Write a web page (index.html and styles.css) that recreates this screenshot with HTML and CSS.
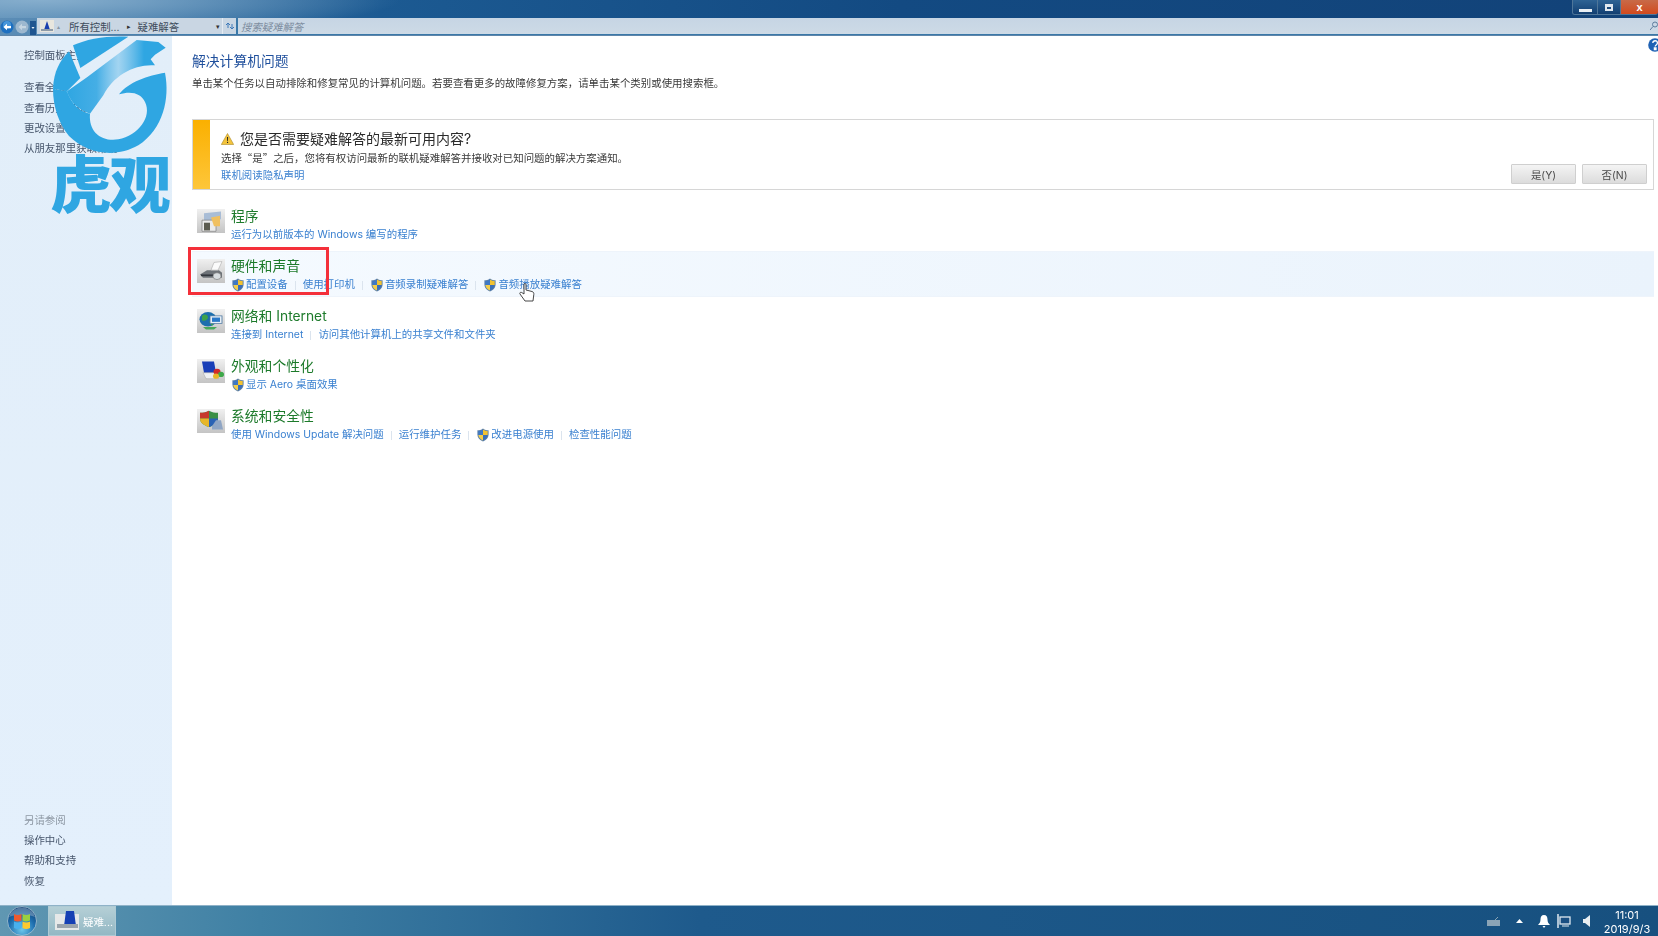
FILE: index.html
```html
<!DOCTYPE html>
<html lang="zh-CN">
<head>
<meta charset="utf-8">
<title>疑难解答</title>
<link rel="stylesheet" href="styles.css">
</head>
<body>
<svg class="defs" width="0" height="0" aria-hidden="true">
  <defs>
    <linearGradient id="tile" x1="0" y1="0" x2="0" y2="1"><stop offset="0" stop-color="#f0f0f0"/><stop offset="1" stop-color="#c4c4c4"/></linearGradient>
    <linearGradient id="swirl" x1="0" y1="0" x2="1" y2="0"><stop offset="0" stop-color="#2fa6e2"/><stop offset=".3" stop-color="#45aee5"/><stop offset=".52" stop-color="#8ccbee" stop-opacity=".75"/><stop offset=".78" stop-color="#2fa6e2"/><stop offset="1" stop-color="#2fa6e2"/></linearGradient>
  </defs>
  <symbol id="shield" viewBox="0 0 14 15">
    <path d="M7 .5C5 2 3 2.500 1 2.500V7c0 3.500 2.500 6 6 7.500 3.500-1.500 6-4 6-7.500V2.500C11 2.500 9 2 7 .5Z" fill="#5b7fa8"/>
    <path d="M7 1.500C5.300 2.700 3.700 3.200 2 3.300V7.500H7Z" fill="#3f78c4"/>
    <path d="M7 1.500C8.700 2.700 10.300 3.200 12 3.300V7.500H7Z" fill="#f2c230"/>
    <path d="M2 7.500H7V13.400C4.300 12.200 2.300 10.200 2 7.500Z" fill="#f4ce4a"/>
    <path d="M12 7.500H7V13.400C9.700 12.200 11.700 10.200 12 7.500Z" fill="#3a6fb8"/>
  </symbol>
</svg>
<div class="window">
  <header class="titlebar">
    <div class="controls">
      <span class="ctl ctl-min"><i></i></span>
      <span class="ctl ctl-max"><i></i></span>
      <span class="ctl ctl-close">x</span>
    </div>
  </header>
  <div class="addressbar">
    <div class="nav">
      <svg width="36" height="18" viewBox="0 0 36 18">
        <circle cx="7" cy="9" r="6.500" fill="#1d6fc0"/>
        <circle cx="7" cy="7" r="4" fill="#5aa6e6" opacity=".7"/>
        <path d="M3.500 9 7 5.800V8H11V10.200H7V12.200Z" fill="#fff"/>
        <circle cx="22" cy="9" r="6.500" fill="#9db8cf"/>
        <path d="M18.500 9 22 5.800V8H26V10.200H22V12.200Z" fill="#c6d6e2"/>
        <rect x="30" y="3" width="6" height="14" fill="#1f5590"/>
        <path d="M31.500 9H34.500L33 11Z" fill="#e8f0f8"/>
      </svg>
    </div>
    <div class="crumbs">
      <svg class="crumb-icon" width="14" height="14" viewBox="0 0 14 14">
        <rect x="0" y="1" width="14" height="12" fill="#e8e6de"/>
        <path d="M4 11 7 2l3 9Z" fill="#1a3fae"/>
        <rect x="1" y="10" width="12" height="2" fill="#8d9aa8"/>
      </svg>
      <span class="crumb-sep">▴</span>
      <span class="crumb">所有控制...</span>
      <span class="crumb-arrow">▸</span>
      <span class="crumb">疑难解答</span>
      <span class="crumb-drop">▾</span>
    </div>
    <div class="refresh">
      <svg width="10" height="10" viewBox="0 0 10 10"><path d="M1 4 3 2l2 2M3 2v5M9 6 7 8 5 6M7 8V3" fill="none" stroke="#3c78b8" stroke-width="1"/></svg>
    </div>
    <div class="search">
      <span class="search-text">搜索疑难解答</span>
      <svg class="search-icon" width="8" height="10" viewBox="0 0 8 10"><circle cx="5" cy="3.500" r="2.500" fill="none" stroke="#5d7c9c"/><path d="M3 5.500 0 9" stroke="#5d7c9c"/></svg>
    </div>
  </div>
  <div class="main">
    <aside class="sidebar">
      <nav class="side-top">
        <a class="side-home">控制面板主页</a>
        <a>查看全部</a>
        <a>查看历史记录</a>
        <a>更改设置</a>
        <a>从朋友那里获取帮助</a>
      </nav>
      <nav class="side-bottom">
        <span class="side-label">另请参阅</span>
        <a>操作中心</a>
        <a>帮助和支持</a>
        <a>恢复</a>
      </nav>
    </aside>
    <main class="content">
      <h1 class="page-title">解决计算机问题</h1>
      <p class="page-sub">单击某个任务以自动排除和修复常见的计算机问题。若要查看更多的故障修复方案，请单击某个类别或使用搜索框。</p>

      <section class="banner">
        <div class="banner-strip"></div>
        <div class="banner-body">
          <div class="banner-title">
            <svg width="13" height="12" viewBox="0 0 13 12"><path d="M6.500.5 12.700 11.500H.3Z" fill="#f3c33b" stroke="#a98a2a" stroke-width=".6"/><path d="M6 4h1.100l-.2 4.200h-.7ZM6 9h1.100v1.100H6Z" fill="#222"/></svg>
            <span>您是否需要疑难解答的最新可用内容?</span>
          </div>
          <p class="banner-text">选择“是”之后，您将有权访问最新的联机疑难解答并接收对已知问题的解决方案通知。</p>
          <a class="link">联机阅读隐私声明</a>
        </div>
        <div class="banner-actions">
          <button class="btn">是(Y)</button>
          <button class="btn">否(N)</button>
        </div>
      </section>

      <div class="cat">
        <svg class="cat-icon" viewBox="0 0 28 28" preserveAspectRatio="none">
          <rect width="28" height="28" fill="url(#tile)"/>
          <path d="M7 5 24 3V12L7 14Z" fill="#a9bdd6"/>
          <path d="M5 13H19V26H5Z" fill="#ececec" stroke="#777" stroke-width=".7"/>
          <rect x="7" y="16" width="6" height="9" fill="#5c5c50"/>
          <path d="M14 10 23 8V20H17Z" fill="#f0c060"/>
        </svg>
        <div class="cat-body">
          <a class="cat-title">程序</a>
          <div class="cat-links"><a class="link">运行为以前版本的 Windows 编写的程序</a></div>
        </div>
      </div>

      <div class="cat cat-hover">
        <svg class="cat-icon" viewBox="0 0 28 28" preserveAspectRatio="none">
          <rect width="28" height="28" fill="url(#tile)"/>
          <path d="M3 18 10 13H22L25 16V22H6Z" fill="#6e7378"/>
          <path d="M17 4 25 3 21 13H14Z" fill="#fbfbfb" stroke="#999" stroke-width=".5"/>
          <path d="M4 18H16V20H4Z" fill="#33383e"/>
          <circle cx="20" cy="20" r="4" fill="#d8dde0" stroke="#777" stroke-width=".7"/>
        </svg>
        <div class="cat-body">
          <a class="cat-title">硬件和声音</a>
          <div class="cat-links">
            <a class="link"><svg class="shield"><use href="#shield"/></svg>配置设备</a>
            <i class="sep"></i>
            <a class="link">使用打印机</a>
            <i class="sep"></i>
            <a class="link"><svg class="shield"><use href="#shield"/></svg>音频录制疑难解答</a>
            <i class="sep"></i>
            <a class="link"><svg class="shield"><use href="#shield"/></svg>音频播放疑难解答</a>
          </div>
        </div>
      </div>

      <div class="cat cat-after">
        <svg class="cat-icon" viewBox="0 0 28 28" preserveAspectRatio="none">
          <rect width="28" height="28" fill="url(#tile)"/>
          <circle cx="11" cy="12" r="8.500" fill="#1c6fae"/>
          <path d="M5 8c3-3 6-1 6 2s-4 5-6 3ZM12 14l5 1-2 5Z" fill="#3ea24a"/>
          <rect x="13" y="8" width="12" height="9" fill="#e7eef5" stroke="#44709c" stroke-width=".8"/>
          <rect x="15" y="10" width="8" height="5" fill="#2a78c8"/>
          <path d="M6 21H20L17 24H9Z" fill="#49a85c"/>
        </svg>
        <div class="cat-body">
          <a class="cat-title">网络和 Internet</a>
          <div class="cat-links">
            <a class="link">连接到 Internet</a>
            <i class="sep"></i>
            <a class="link">访问其他计算机上的共享文件和文件夹</a>
          </div>
        </div>
      </div>

      <div class="cat">
        <svg class="cat-icon" viewBox="0 0 28 28" preserveAspectRatio="none">
          <rect width="28" height="28" fill="url(#tile)"/>
          <path d="M5 3H17L19 16H7Z" fill="#1a3fb8"/>
          <path d="M6 16H18L22 23H9Z" fill="#eef0f2" stroke="#999" stroke-width=".5"/>
          <circle cx="20" cy="15" r="3.500" fill="#d22a2a"/>
          <circle cx="24" cy="18" r="3" fill="#3fa84a"/>
          <circle cx="19" cy="20" r="3" fill="#e8b628"/>
        </svg>
        <div class="cat-body">
          <a class="cat-title">外观和个性化</a>
          <div class="cat-links">
            <a class="link"><svg class="shield"><use href="#shield"/></svg>显示 Aero 桌面效果</a>
          </div>
        </div>
      </div>

      <div class="cat">
        <svg class="cat-icon" viewBox="0 0 28 28" preserveAspectRatio="none">
          <rect width="28" height="28" fill="url(#tile)"/>
          <path d="M12 2C9 4 6 4.500 3 4.500V11C3 16 7 19 12 21 17 19 21 16 21 11V4.500C18 4.500 15 4 12 2Z" fill="#3a8f46"/>
          <path d="M12 2C9 4 6 4.500 3 4.500V11H12Z" fill="#c7392c"/>
          <path d="M12 11H3C3 16 7 19 12 21Z" fill="#e8b628"/>
          <path d="M12 11H21C21 16 17 19 12 21Z" fill="#2a62b4"/>
          <path d="M15 20 19 13H24L26 24H15Z" fill="#8fa5c4"/>
        </svg>
        <div class="cat-body">
          <a class="cat-title">系统和安全性</a>
          <div class="cat-links">
            <a class="link">使用 Windows Update 解决问题</a>
            <i class="sep"></i>
            <a class="link">运行维护任务</a>
            <i class="sep"></i>
            <a class="link"><svg class="shield"><use href="#shield"/></svg>改进电源使用</a>
            <i class="sep"></i>
            <a class="link">检查性能问题</a>
          </div>
        </div>
      </div>
    </main>
  </div>
  <footer class="taskbar">
    <svg class="orb" width="32" height="30" viewBox="0 0 32 30">
      <defs><radialGradient id="orbfill" cx=".5" cy=".8" r=".8"><stop offset="0" stop-color="#6cc8ec"/><stop offset=".55" stop-color="#1f70b0"/><stop offset="1" stop-color="#0d3c70"/></radialGradient></defs>
      <circle cx="16" cy="15" r="14.500" fill="url(#orbfill)" stroke="#a8c4d4" stroke-width=".8"/>
      <path d="M3 11C5 4 11 1.500 16 1.500S27 4 29 11C22 8 10 8 3 11Z" fill="#fff" opacity=".28"/>
      <path d="M8 8c2.500 1.200 5 1.200 7.500 0v6.500c-2.500 1.200-5 1.200-7.500 0Z" fill="#ee5a30"/>
      <path d="M16.500 8c2.500 1.200 5 1.200 7.500 0v6.500c-2.500 1.200-5 1.200-7.500 0Z" fill="#9ad040"/>
      <path d="M8 15.500c2.500 1.200 5 1.200 7.500 0V22c-2.500 1.200-5 1.200-7.500 0Z" fill="#48b0ee"/>
      <path d="M16.500 15.500c2.500 1.200 5 1.200 7.500 0V22c-2.500 1.200-5 1.200-7.500 0Z" fill="#fcca30"/>
    </svg>
    <div class="task">
      <svg width="26" height="24" viewBox="0 0 26 24">
        <rect x="1" y="5" width="24" height="16" fill="#e6e8e8"/>
        <path d="M12 2H20L22 17H10Z" fill="#1640b4"/>
        <path d="M3 15H24V19H3Z" fill="#9ba4ac"/>
      </svg>
      <span>疑难...</span>
    </div>
    <div class="tray">
      <svg class="tray-kbd" width="15" height="11" viewBox="0 0 15 11"><path d="M1 4H14V10H1Z" fill="#8ba4b6"/><path d="M9 4 12 1" stroke="#8ba4b6"/></svg>
      <svg class="tray-up" width="7" height="4" viewBox="0 0 7 4"><path d="M3.500 0 7 4H0Z" fill="#fff"/></svg>
      <svg class="tray-bell" width="12" height="13" viewBox="0 0 12 13"><path d="M6 0C3.500 0 2.500 2 2.500 4.500S1.500 8.500 0 10H12C10.500 8.500 9.500 7 9.500 4.500S8.500 0 6 0ZM4.500 11H7.500L6 13Z" fill="#fff"/></svg>
      <svg class="tray-net" width="14" height="14" viewBox="0 0 14 14"><path d="M1 0V14" stroke="#dfe9f0" stroke-width="1.500"/><rect x="3" y="3" width="10" height="7" fill="#1a4f82" stroke="#dfe9f0" stroke-width="1.300"/><path d="M5 12H12" stroke="#dfe9f0"/></svg>
      <svg class="tray-vol" width="7" height="12" viewBox="0 0 7 12"><path d="M0 4H2L7 0V12L2 8H0Z" fill="#e8eef2"/></svg>
      <div class="clock"><span>11:01</span><span>2019/9/3</span></div>
    </div>
  </footer>

  <svg class="logo" viewBox="0 0 390 390" aria-hidden="true">
    <path d="M84 40C125 20 190 10 250 14L106 108Z" fill="#2fa6e2"/>
    <path d="M24 170C26 118 45 86 72 58L106 138 66 178Z" fill="#2fa6e2"/>
    <path d="M126 136 275 24 340 30 362 47 330 68 317 82 330 100C270 95 205 130 175 190L135 245C100 235 76 210 66 178Z" fill="url(#swirl)"/>
    <path d="M360 122C375 200 355 290 280 340 210 380 125 365 72 312 42 275 24 225 24 170L66 178C82 220 105 240 135 245 130 300 170 330 220 322 280 310 322 255 300 210 290 185 260 175 222 187 250 150 310 130 360 122Z" fill="#2fa6e2"/>
  </svg>
  <div class="logo-name">虎观</div>
  <div class="redbox"></div>
  <svg class="cursor" width="16" height="20" viewBox="0 0 16 20"><path d="M5 1c1-1 2-.5 2 1v5l6 1.500c1.500.5 2 1.500 1.800 3L14 18H6L1 11c-.8-1.200.8-2.300 2-1.300L5 11Z" fill="#fff" stroke="#333" stroke-width=".9"/></svg>
  <svg class="help" width="14" height="14" viewBox="0 0 14 14"><circle cx="7" cy="7" r="6.800" fill="#1f62b4"/><path d="M4.800 5c.2-3 4.700-3 4.600 0 0 2-2.200 1.800-2.200 3.500M6.400 10h1.600v1.500H6.400Z" fill="none" stroke="#fff" stroke-width="1.300"/></svg>
</div>
</body>
</html>
```
FILE: styles.css
```css
* { box-sizing: border-box; }
html, body { margin: 0; height: 100%; overflow: hidden; background: #fff; }
body { font-family: "Inter", "Noto Sans CJK SC", "Noto Sans", sans-serif; font-size: 10.45px; }
.defs { position: absolute; }
.window { position: relative; width: 1658px; height: 936px; display: flex; flex-direction: column; overflow: hidden; filter: blur(.5px); }

.titlebar { height: 18px; flex: none; display: flex; justify-content: flex-end; align-items: flex-start;
  background: radial-gradient(ellipse 360px 34px at 40px 0, #86aecd 0, rgba(134,174,205,0) 100%), linear-gradient(90deg, #4f85b1 0, #1c5a92 380px, #134a82 900px, #124278 100%); }
.controls { display: flex; height: 15px; border: 1px solid #4f7699; border-top: 0; border-right: 0; border-radius: 0 0 3px 3px; overflow: hidden; width: 86px; }
.ctl { display: flex; align-items: center; justify-content: center; color: #fff; background: linear-gradient(#2e6394, #123f72); border-right: 1px solid #4f7699; }
.ctl-min { width: 25px; }
.ctl-min i { width: 13px; height: 3px; margin-top: 6px; background: #e9eff4; }
.ctl-max { width: 23px; }
.ctl-max i { width: 8px; height: 7px; border: 2px solid #dfe7ee; border-top-width: 3px; background: #1b4a7c; }
.ctl-close { flex: 1; border: 0; font: bold 11px/1 "Liberation Sans", sans-serif; background: linear-gradient(#c86a48, #d24a1e); }

.addressbar { height: 18px; flex: none; display: flex; align-items: stretch; padding-bottom: 1px;
  background: linear-gradient(90deg, #5c8db6, #3a78a8 240px); border-bottom: 1px solid #5f86aa; }
.nav { width: 36px; flex: none; }
.nav svg { display: block; }
.crumbs { width: 185px; margin-left: 1px; flex: none; display: flex; align-items: center; background: #c9d6e3; color: #3e4c5c; }
.crumb-icon { margin-left: 3px; }
.crumb-sep { width: 12px; margin-left: 3px; font-size: 6px; color: #8897a6; }
.crumb { font-size: 10.4px; white-space: nowrap; }
.crumb-arrow { width: 18px; text-align: center; font-size: 7px; color: #333; }
.crumb-drop { margin-left: auto; margin-right: 2px; font-size: 7px; color: #333; }
.refresh { width: 14px; flex: none; display: flex; align-items: center; justify-content: center; background: #c9d6e3; border-left: 1px solid #e4ebf2; }
.search { flex: 1; margin-left: 2px; display: flex; align-items: center; justify-content: space-between; padding-left: 3px; background: linear-gradient(#c6d5e4, #cddae6); }
.search-text { color: #7d8da0; font-style: italic; font-size: 10.4px; }

.main { flex: 1; min-height: 0; display: flex; }
.sidebar { width: 172px; flex: none; display: flex; flex-direction: column; justify-content: space-between; padding: 10px 0 13px 24px; background: linear-gradient(#e2eef9, #e4f0fc); }
.sidebar a, .side-label { display: block; height: 20.300px; line-height: 20px; color: #47566c; white-space: nowrap; }
.side-home { margin-bottom: 12px; }
.side-label { color: #8e98a4; }

.content { flex: 1; min-width: 0; padding: 15px 4px 0 20px; }
.page-title { margin: 0; font-size: 13.800px; line-height: 20px; font-weight: 400; color: #1f4f9c; }
.page-sub { margin: 4px 0 0; line-height: 16px; color: #3a3a3a; font-family: "Noto Sans CJK SC", sans-serif; }

.banner { display: flex; height: 71px; margin-top: 28px; border: 1px solid #d6d6d6; background: #fff; }
.banner-strip { width: 17px; flex: none; background: linear-gradient(#fbb000, #fdc63a); }
.banner-body { flex: 1; padding: 9px 0 0 11px; }
.banner-title { display: flex; align-items: center; gap: 6px; font-size: 14px; line-height: 20px; color: #2a2a2a; }
.banner-text { margin: 0; line-height: 17px; color: #3a3a3a; font-family: "Noto Sans CJK SC", sans-serif; }
.link { display: inline-flex; align-items: center; color: #3a80d0; white-space: nowrap; line-height: 16px; }
.banner-body .link { margin-top: 2px; }
.banner-actions { display: flex; align-items: flex-end; gap: 6px; padding: 0 6px 5px 0; }
.btn { width: 65px; height: 20px; padding: 0; font: inherit; color: #4a4a4a; background: linear-gradient(#f4f4f4, #dcdcdc); border: 1px solid #cfcfcf; border-radius: 1px; }

.cat { display: flex; height: 46px; margin-top: 4px; padding: 4px 0 0 5px; }
.banner + .cat { margin-top: 12px; }
.banner + .cat + .cat { margin-top: 3px; }
.cat-after { margin-top: 5px; }
.cat-hover { background: linear-gradient(90deg, #f5faff, #eaf3fc); border: solid #eef4fb; border-width: 1px 0; }
.cat-icon { width: 28px; height: 24px; margin-top: 3px; flex: none; }
.cat-body { margin-left: 6px; }
.cat-title { display: block; font-size: 13.800px; line-height: 20px; color: #1c7a2a; white-space: nowrap; }
.cat-links { display: flex; align-items: center; height: 16px; margin-top: 1px; }
.sep { width: 1px; height: 9px; margin: 0 7px; background: #dbe4ee; }
.shield { width: 14px; height: 14px; margin-right: 1px; flex: none; }

.taskbar { height: 31px; flex: none; display: flex; align-items: center; border-top: 1px solid #8fb2c8;
  background: linear-gradient(90deg, #6097b2 0, #3f80a4 260px, #1e5a8c 700px, #17507f 100%); }
.orb { margin-left: 6px; flex: none; }
.task { display: flex; align-items: center; gap: 3px; width: 68px; height: 30px; margin-left: 10px; padding-left: 5px; color: #fff; background: linear-gradient(#b5cfd6, #93b8c4); border: 1px solid #aecad4; }
.tray { margin-left: auto; display: flex; align-items: center; height: 100%; }
.tray-kbd { margin-right: 15px; }
.tray-up { margin-right: 15px; }
.tray-bell { margin-right: 7px; }
.tray-net { margin-right: 12px; }
.tray-vol { margin-right: 14px; }
.clock { display: flex; flex-direction: column; align-items: center; width: 46px; margin-right: 8px; padding-top: 1px; color: #fff; font-size: 11px; line-height: 14px; white-space: nowrap; }

.logo { position: absolute; left: 45px; top: 32px; width: 130px; height: 130px; }
.logo-name { position: absolute; left: 50px; top: 141px; font: 900 62px/80px "Noto Sans CJK SC", sans-serif; letter-spacing: -3px; color: #2fa6e2; white-space: nowrap; }
.redbox { position: absolute; left: 188px; top: 247px; width: 141px; height: 48px; border: 3px solid #f4303a; }
.cursor { position: absolute; left: 519px; top: 283px; }
.help { position: absolute; left: 1648px; top: 38px; }
```
